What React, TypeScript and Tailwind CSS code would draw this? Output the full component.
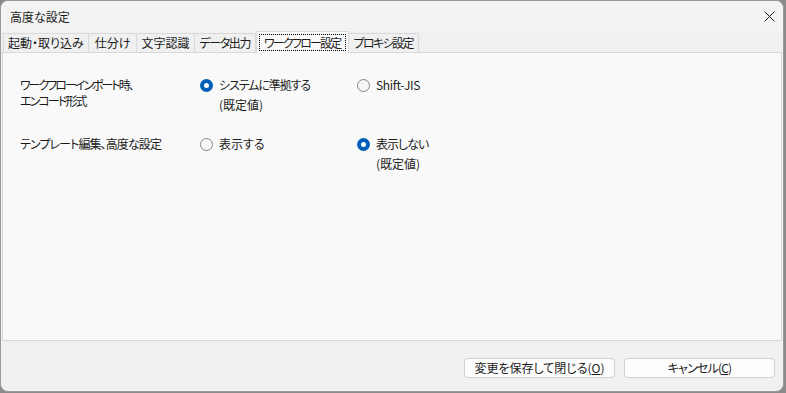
const font = "font-['Noto_Sans_CJK_JP','Noto_Sans',sans-serif] [font-feature-settings:'palt']";

const tabs = [
  { t: "起動・取り込み", k: "pl-[4px] pr-[4px]" },
  { t: "仕分け", k: "pl-[6px] pr-[6px]" },
  { t: "文字認識", k: "pl-[4px] pr-[5px]" },
  { t: "データ出力", k: "pl-[4px] pr-[5px] tracking-[-1.4px]" },
  { t: "ワークフロー設定", k: "tracking-[-1.8px]" },
  { t: "プロキシ設定", k: "pl-[4px] pr-[5px] tracking-[-1.6px]" },
];

function Radio({ checked }: { checked: boolean }) {
  return checked ? (
    <span className="flex h-[13px] w-[13px] shrink-0 items-center justify-center rounded-full bg-[#005fb8]">
      <span className="h-[5px] w-[5px] rounded-full bg-white" />
    </span>
  ) : (
    <span className="h-[13px] w-[13px] shrink-0 rounded-full border border-[#868686] bg-[#f6f6f6]" />
  );
}

function Option({ checked, label, note, width, k }: { checked: boolean; label: string; note?: boolean; width?: string; k?: string }) {
  return (
    <div className={`flex flex-col ${width ?? ""}`}>
      <div className="flex h-[16px] items-center gap-[6px]">
        <Radio checked={checked} />
        <span className={`leading-[16px] ${k ?? ""}`}>{label}</span>
      </div>
      {note && <div className="mt-[4px] pl-[19px] leading-[16px]">(既定値)</div>}
    </div>
  );
}

export default function App() {
  return (
    <div className={`h-[393px] w-[786px] bg-[#8a8a8a] text-[12px] text-[#1b1b1b] ${font}`}>
      <div className="flex h-[392px] w-[784px] flex-col overflow-hidden rounded-[8px] border border-[#9a9a9a] bg-[#f0f0f0]">
        {/* title bar */}
        <div className="flex h-[31px] shrink-0 items-center justify-between bg-[#f3f3f3] pl-[9px] pr-[8px]">
          <span className="leading-[16px]">高度な設定</span>
          <svg width="11" height="11" viewBox="0 0 11 11">
            <path d="M0.5 0.5 L10.5 10.5 M10.5 0.5 L0.5 10.5" stroke="#1b1b1b" strokeWidth="1" fill="none" />
          </svg>
        </div>

        {/* tabs */}
        <div className="flex h-[20px] shrink-0 items-end pl-[2px]">
          {tabs.map((tab, i) =>
            i === 4 ? (
              <div key={tab.t} className="relative z-10 -mb-[1px] flex h-[22px] items-center border border-b-0 border-[#d9d9d9] bg-[#f9f9f9] px-[2px]">
                <span className={`border border-dotted border-black pl-[4px] pr-[5px] leading-[15px] ${tab.k}`}>{tab.t}</span>
              </div>
            ) : (
              <div key={tab.t} className={`-ml-[1px] flex h-[19px] items-center border border-b-0 border-[#d9d9d9] bg-[#f0f0f0] leading-[16px] first:ml-0 ${tab.k}`}>
                {tab.t}
              </div>
            )
          )}
        </div>

        {/* page */}
        <div className="mx-[1px] flex h-[289px] shrink-0 flex-col gap-[23px] border border-[#d9d9d9] bg-[#f9f9f9] pl-[17px] pt-[24px]">
          <div className="flex">
            <div className="w-[180px] leading-[16px]">
              <div className="tracking-[-2px]">ワークフローインポート時、</div>
              <div className="tracking-[-1.9px]">エンコード形式</div>
            </div>
            <Option checked label="システムに準拠する" note width="w-[157px]" k="tracking-[-1.1px]" />
            <Option checked={false} label="Shift-JIS" k="tracking-[-0.3px]" />
          </div>
          <div className="flex">
            <div className="w-[180px] leading-[16px] tracking-[-0.9px]">テンプレート編集、高度な設定</div>
            <Option checked={false} label="表示する" width="w-[157px]" />
            <Option checked label="表示しない" note k="tracking-[-1px]" />
          </div>
        </div>

        {/* footer */}
        <div className="flex justify-end gap-[9px] pr-[8px] pt-[17px]">
          <button className="flex h-[20px] w-[151px] items-center justify-center rounded-[4px] border border-[#d0d0d0] bg-[#fdfdfd] leading-[16px]">
            変更を保存して閉じる(<span className="underline">O</span>)
          </button>
          <button className="flex h-[20px] w-[151px] items-center justify-center rounded-[4px] border border-[#d0d0d0] bg-[#fdfdfd] leading-[16px] tracking-[-0.8px]">
            キャンセル(<span className="underline">C</span>)
          </button>
        </div>
      </div>
    </div>
  );
}
